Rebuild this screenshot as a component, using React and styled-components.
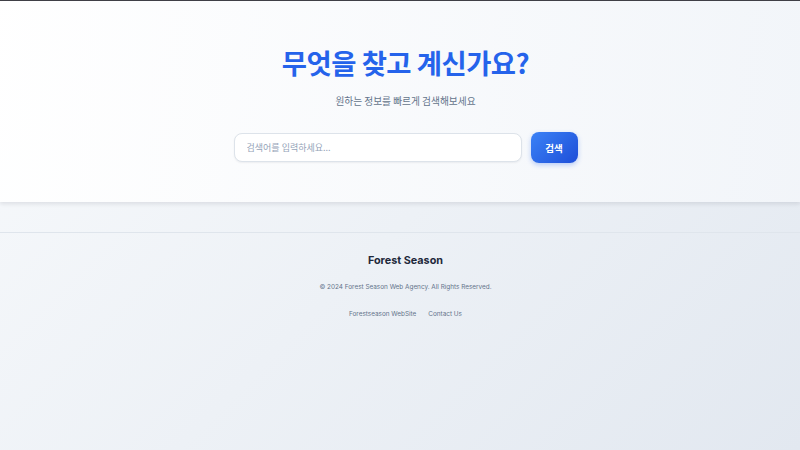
import styled, { createGlobalStyle } from "styled-components";

const GlobalStyle = createGlobalStyle`
  * { box-sizing: border-box; }
  html, body { margin: 0; padding: 0; }
  body {
    min-height: 100vh;
    font-family: Inter, "Noto Sans CJK KR", sans-serif;
    background: linear-gradient(135deg, #f8fafc 0%, #e2e8f0 100%);
    border-top: 1px solid #3f3f46;
  }
`;

const Page = styled.div`
  display: flex;
  flex-direction: column;
`;

const Hero = styled.section`
  height: 201px;
  display: flex;
  flex-direction: column;
  align-items: center;
  padding: 42px 0 0 11px;
  background: linear-gradient(90deg, rgba(255, 255, 255, 0.95) 0%, rgba(243, 246, 250, 0.9) 100%);
  box-shadow: 0 2px 4px rgba(15, 23, 42, 0.1);
`;

const Title = styled.h1`
  margin: 0;
  font-family: "Noto Sans CJK KR", sans-serif;
  font-size: 27.4px;
  font-weight: 700;
  line-height: 38px;
  letter-spacing: -0.5px;
  color: #2563eb;
`;

const Subtitle = styled.p`
  margin: 13px 0 0;
  font-family: "Noto Sans CJK KR", sans-serif;
  font-size: 9.7px;
  line-height: 14px;
  color: #64748b;
`;

const SearchRow = styled.form`
  margin-top: 24px;
  display: flex;
  align-items: center;
  gap: 9px;
`;

const SearchInput = styled.input`
  width: 288px;
  height: 29px;
  padding: 0 12px;
  border: 1px solid #dde3ea;
  border-radius: 8px;
  background: #fff;
  box-shadow: 0 1px 2px rgba(15, 23, 42, 0.06);
  font-family: "Noto Sans CJK KR", sans-serif;
  font-size: 9px;
  color: #334155;
  outline: none;
  &::placeholder { color: #94a3b8; }
`;

const SearchButton = styled.button`
  width: 47px;
  height: 31px;
  border: none;
  border-radius: 8px;
  background: linear-gradient(135deg, #3b82f6 0%, #1d4ed8 100%);
  box-shadow: 0 2px 5px rgba(37, 99, 235, 0.3);
  color: #fff;
  font-family: "Noto Sans CJK KR", sans-serif;
  font-size: 9.5px;
  font-weight: 700;
`;

const Spacer = styled.div`
  height: 30px;
`;

const Footer = styled.footer`
  border-top: 1px solid #dfe5ec;
  display: flex;
  flex-direction: column;
  align-items: center;
  padding: 20px 0 0 11px;
`;

const Brand = styled.h3`
  margin: 0;
  font-size: 10.8px;
  font-weight: 700;
  line-height: 16px;
  color: #1e293b;
`;

const Copy = styled.p`
  margin: 13px 0 0;
  font-size: 6.4px;
  line-height: 10px;
  color: #64748b;
`;

const Links = styled.nav`
  margin-top: 17px;
  display: flex;
  gap: 12px;
`;

const FooterLink = styled.a`
  font-size: 6.4px;
  line-height: 10px;
  color: #64748b;
  text-decoration: none;
`;

export default function App() {
  return (
    <Page>
      <GlobalStyle />
      <Hero>
        <Title>무엇을 찾고 계신가요?</Title>
        <Subtitle>원하는 정보를 빠르게 검색해보세요</Subtitle>
        <SearchRow onSubmit={(e) => e.preventDefault()}>
          <SearchInput placeholder="검색어를 입력하세요..." />
          <SearchButton type="submit">검색</SearchButton>
        </SearchRow>
      </Hero>
      <Spacer />
      <Footer>
        <Brand>Forest Season</Brand>
        <Copy>© 2024 Forest Season Web Agency. All Rights Reserved.</Copy>
        <Links>
          <FooterLink href="#">Forestseason WebSite</FooterLink>
          <FooterLink href="#">Contact Us</FooterLink>
        </Links>
      </Footer>
    </Page>
  );
}
